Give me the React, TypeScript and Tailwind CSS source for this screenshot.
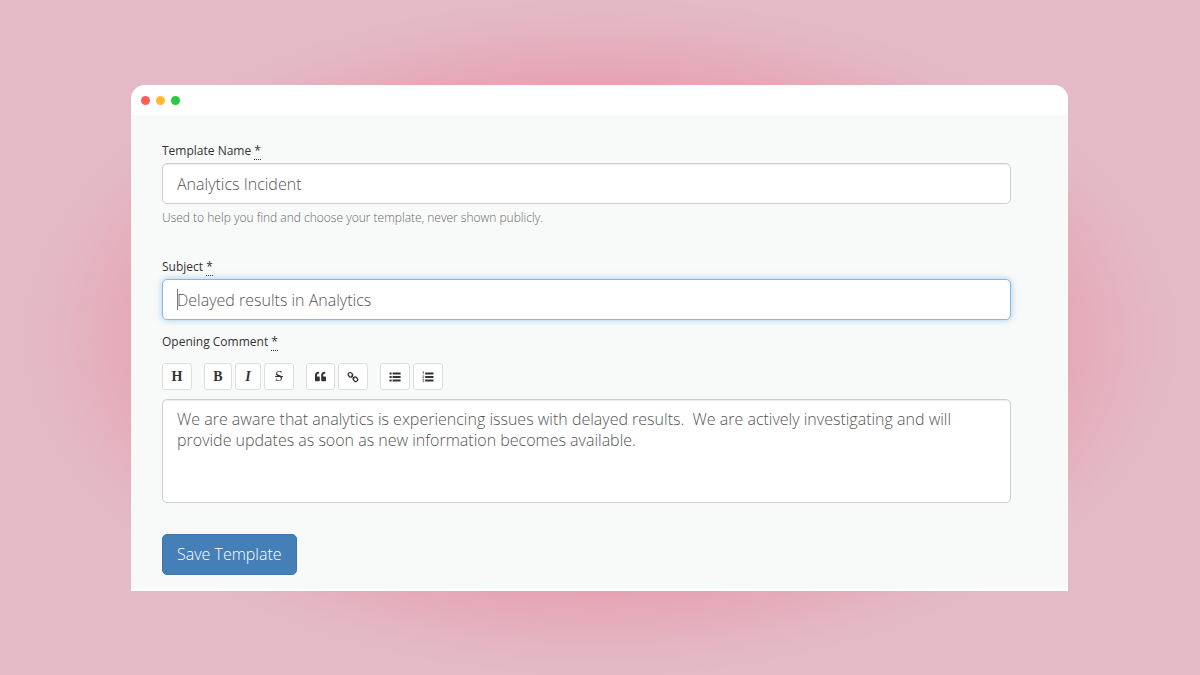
import React from 'react';
import { FaQuoteLeft } from 'react-icons/fa';

const fieldClass =
  "block w-full rounded-[5px] border bg-white px-[14px] text-base font-light text-[#555] outline-none";
const idleClass = "border-[#cccfce] shadow-[inset_0_1px_1px_rgba(0,0,0,0.08)]";
const activeClass = "border-[#8bb5e0] shadow-[0_0_7px_rgba(102,175,233,0.6)]";

const toolClass =
  "flex h-[27px] items-center justify-center rounded-[3px] border border-[#dcdfde] bg-white text-[#333]";

const Required = () => (
  <abbr title="required" className="border-b border-dotted border-[#333] no-underline">*</abbr>
);

const LinkIcon = () => (
  <svg width="12" height="12" viewBox="0 0 12 12" fill="none" stroke="currentColor" strokeWidth="1.3" strokeLinecap="round">
    <rect x="1" y="1.9" width="4.8" height="3.8" rx="1.9" transform="rotate(45 3.4 3.8)" />
    <rect x="6" y="6.3" width="4.8" height="3.8" rx="1.9" transform="rotate(45 8.4 8.2)" />
    <path d="M4.6 4.8 7.3 7.3" strokeWidth="1" />
  </svg>
);

const BulletListIcon = () => (
  <svg width="12" height="10" viewBox="0 0 12 10" fill="currentColor">
    <rect x="0.5" y="0.5" width="2.2" height="2" rx="0.5" />
    <rect x="0.5" y="4" width="2.2" height="2" rx="0.5" />
    <rect x="0.5" y="7.5" width="2.2" height="2" rx="0.5" />
    <path d="M3.6 0.5h8v2h-8zM3.6 4h8v2h-8zM3.6 7.5h8v2h-8z" />
  </svg>
);

const NumberListIcon = () => (
  <svg width="12" height="12" viewBox="0 0 12 12" fill="none" stroke="currentColor">
    <path d="M3.2 2.5h8.3M3.2 6h8.3M3.2 9.5h8.3" strokeWidth="1.9" />
    <path d="M.6 1 1.4.5V3.2M.5 4.9C1 4.4 2 4.6 1.8 5.4L.6 6.9H2M.5 8.5H1.8L1.1 9.5C2.3 9.6 2 11.3.4 11" strokeWidth="0.6" />
  </svg>
);

const Toolbar = () => (
  <div role="toolbar" aria-label="Formatting" className="flex gap-3 font-['Liberation_Serif',serif] text-sm leading-none">
    <button type="button" aria-label="Heading" className={`${toolClass} w-[30px] font-bold`}>H</button>
    <div className="flex gap-[3px]">
      <button type="button" aria-label="Bold" className={`${toolClass} w-7 font-bold`}>B</button>
      <button type="button" aria-label="Italic" className={`${toolClass} w-[26px] font-bold italic`}>I</button>
      <button type="button" aria-label="Strikethrough" className={`${toolClass} w-[30px] line-through`}>S</button>
    </div>
    <div className="flex gap-[3px]">
      <button type="button" aria-label="Quote" className={`${toolClass} w-[29px]`}><FaQuoteLeft size={11} /></button>
      <button type="button" aria-label="Link" className={`${toolClass} w-[30px]`}><LinkIcon /></button>
    </div>
    <div className="flex gap-[3px]">
      <button type="button" aria-label="Bulleted list" className={`${toolClass} w-[30px]`}><BulletListIcon /></button>
      <button type="button" aria-label="Numbered list" className={`${toolClass} w-[30px]`}><NumberListIcon /></button>
    </div>
  </div>
);

const App = () => {
  return (
    <div className="min-h-screen bg-[#e4bac7] bg-[radial-gradient(ellipse_580px_340px_at_50%_50%,#e79fae_0%,#e6a3b2_74%,#e5adbb_84%,#e4b6c3_93%,#e4bac7_100%)] pt-[85px] pr-[132px] pb-[84px] pl-[131px] font-['Open_Sans',sans-serif]">
      <main className="overflow-hidden rounded-t-[14px] bg-white pb-[3px]">
        {/* Window bar */}
        <div className="flex h-[30px] items-center gap-[6px] px-[10px]">
          <span className="size-[9px] rounded-full bg-[#ff5f57]" />
          <span className="size-[9px] rounded-full bg-[#febc2e]" />
          <span className="size-[9px] rounded-full bg-[#28c840]" />
        </div>

        <form className="bg-[#f8faf9] pt-[27px] pr-[57px] pb-[13px] pl-[31px] text-xs text-[#333]">
          <div className="mb-[31px]">
            <label htmlFor="name" className="mb-[3px] block leading-[18px]">Template Name <Required /></label>
            <input id="name" type="text" defaultValue="Analytics Incident" className={`${fieldClass} ${idleClass} h-[41px]`} />
            <p className="mt-[5px] leading-[18px] font-light text-[#666]">
              Used to help you find and choose your template, never shown publicly.
            </p>
          </div>

          <div className="mb-[13px]">
            <label htmlFor="subject" className="mb-[3px] block leading-[18px]">Subject <Required /></label>
            <div className="relative">
              <input
                id="subject"
                type="text"
                defaultValue="Delayed results in Analytics"
                className={`${fieldClass} ${activeClass} h-[41px]`}
              />
              {/* Text cursor */}
              <span className="absolute top-[10px] left-[15px] h-[21px] w-px bg-[#777]" />
            </div>
          </div>

          <div className="mb-[31px]">
            <label htmlFor="comment" className="mb-3 block leading-[18px]">Opening Comment <Required /></label>
            <Toolbar />
            <textarea
              id="comment"
              defaultValue="We are aware that analytics is experiencing issues with delayed results.  We are actively investigating and will provide updates as soon as new information becomes available."
              className={`${fieldClass} ${idleClass} mt-[9px] h-[104px] resize-none py-[9px] leading-[21px]`}
            />
          </div>

          <button type="submit" className="h-[41px] rounded-[5px] border border-[#3c75ab] bg-[#447fb7] px-[14px] pb-[2px] text-base font-light text-white">
            Save Template
          </button>
        </form>
      </main>
    </div>
  );
};

export default App;
